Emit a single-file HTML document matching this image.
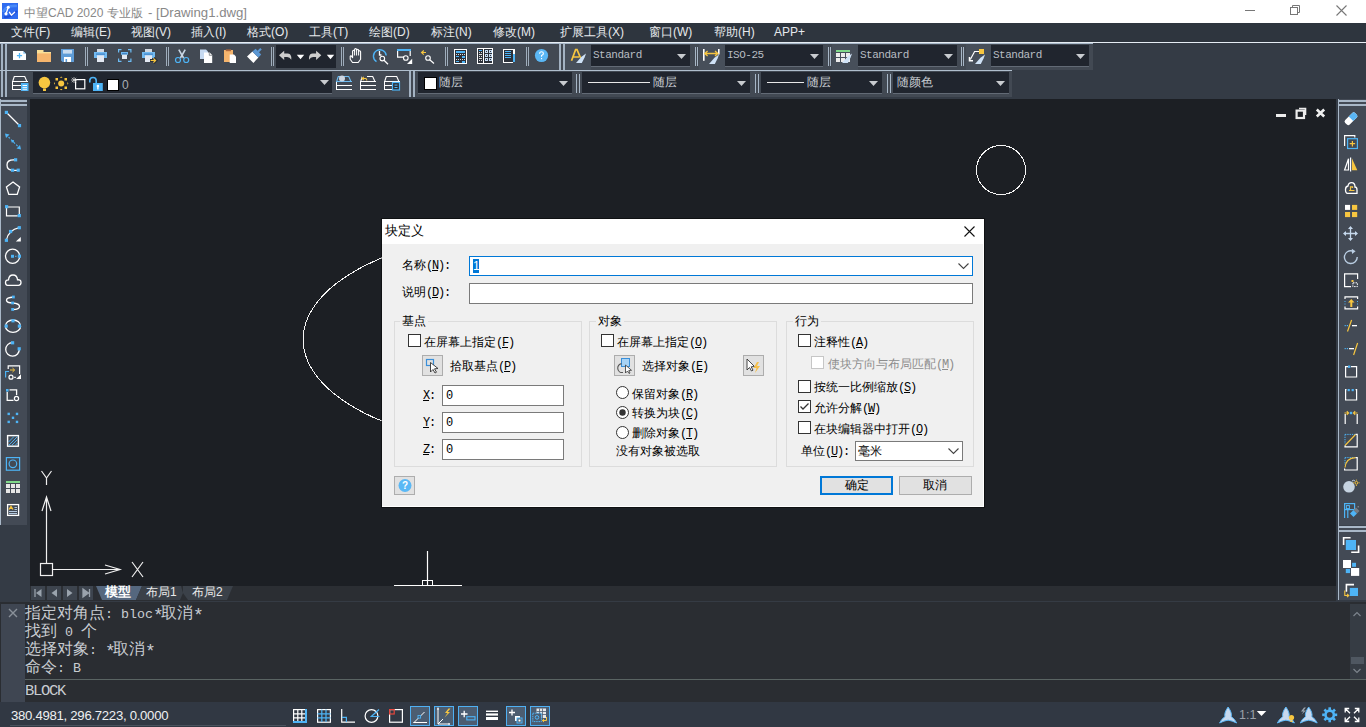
<!DOCTYPE html><html><head><meta charset="utf-8"><style>
*{margin:0;padding:0;box-sizing:border-box}
html,body{width:1366px;height:727px;overflow:hidden;background:#343b45;font-family:"Liberation Sans",sans-serif;position:relative}
.a{position:absolute}
.t{white-space:nowrap;line-height:1}
svg{overflow:visible}
</style></head><body><div class="a" style="left:0px;top:0px;width:1366px;height:23px;background:#ffffff;"></div>
<svg class="a" style="left:2px;top:3px;" width="16" height="16" viewBox="0 0 16 16"><rect x="0" y="0" width="16" height="16" fill="#2f6cf0"/><path d="M1 9 Q4 2 15 3" fill="none" stroke="#4a8af7" stroke-width="2.5"/><path d="M2 14 Q8 15 15 8" fill="none" stroke="#1f4fd8" stroke-width="2"/><path d="M6.3 4.2 L4 10.8 M7.5 9.3 L9.4 12.2 L12.6 9.3" stroke="#fff" stroke-width="1.3" fill="none" stroke-linecap="round" stroke-linejoin="round"/><circle cx="6.3" cy="4.2" r="1.5" fill="#fff"/><circle cx="4" cy="10.8" r="1.6" fill="#fff"/></svg>
<div class="a t" style="left:24px;top:6px;font-size:12px;color:#888;">中望CAD 2020 专业版 <span style="font-size:13.2px;margin-left:2px">- [Drawing1.dwg]</span></div>
<svg class="a" style="left:1245px;top:10px;" width="10" height="1" viewBox="0 0 10 1"><rect x="0" y="0" width="10" height="1" fill="#777"/></svg>
<svg class="a" style="left:1290px;top:5px;" width="10" height="10" viewBox="0 0 10 10"><rect x="0.5" y="2.5" width="7" height="7" fill="none" stroke="#777"/><path d="M2.5 2.5 V0.5 H9.5 V7.5 H7.5" fill="none" stroke="#777"/></svg>
<svg class="a" style="left:1336px;top:5px;" width="11" height="11" viewBox="0 0 11 11"><path d="M0.5 0.5 L10.5 10.5 M10.5 0.5 L0.5 10.5" stroke="#777" stroke-width="1.1"/></svg>
<div class="a" style="left:0px;top:23px;width:1366px;height:19px;background:#2e353e;"></div>
<div class="a t" style="left:11px;top:26px;font-size:12px;color:#e6e9ec;">文件(F)</div>
<div class="a t" style="left:71px;top:26px;font-size:12px;color:#e6e9ec;">编辑(E)</div>
<div class="a t" style="left:131px;top:26px;font-size:12px;color:#e6e9ec;">视图(V)</div>
<div class="a t" style="left:191px;top:26px;font-size:12px;color:#e6e9ec;">插入(I)</div>
<div class="a t" style="left:247px;top:26px;font-size:12px;color:#e6e9ec;">格式(O)</div>
<div class="a t" style="left:309px;top:26px;font-size:12px;color:#e6e9ec;">工具(T)</div>
<div class="a t" style="left:369px;top:26px;font-size:12px;color:#e6e9ec;">绘图(D)</div>
<div class="a t" style="left:431px;top:26px;font-size:12px;color:#e6e9ec;">标注(N)</div>
<div class="a t" style="left:493px;top:26px;font-size:12px;color:#e6e9ec;">修改(M)</div>
<div class="a t" style="left:560px;top:26px;font-size:12px;color:#e6e9ec;">扩展工具(X)</div>
<div class="a t" style="left:649px;top:26px;font-size:12px;color:#e6e9ec;">窗口(W)</div>
<div class="a t" style="left:714px;top:26px;font-size:12px;color:#e6e9ec;">帮助(H)</div>
<div class="a t" style="left:774px;top:26px;font-size:12px;color:#e6e9ec;">APP+</div>
<div class="a" style="left:0px;top:42px;width:1366px;height:1px;background:#e6edf4;"></div>
<div class="a" style="left:0px;top:43px;width:1093px;height:1px;background:#a9b9ca;"></div>
<div class="a" style="left:0px;top:44px;width:1093px;height:26px;background:#424953;"></div>
<div class="a" style="left:0px;top:70px;width:1012px;height:1px;background:#b0bfce;"></div>
<div class="a" style="left:0px;top:71px;width:1012px;height:26px;background:#424953;"></div>
<div class="a" style="left:1px;top:44px;width:2px;height:26px;background:#a3b2c2;"></div>
<div class="a" style="left:5px;top:44px;width:2px;height:26px;background:#a3b2c2;"></div>
<div class="a" style="left:85px;top:47px;width:1px;height:19px;background:#9fadbc;"></div>
<div class="a" style="left:87px;top:47px;width:1px;height:19px;background:#9fadbc;"></div>
<div class="a" style="left:166px;top:47px;width:1px;height:19px;background:#9fadbc;"></div>
<div class="a" style="left:168px;top:47px;width:1px;height:19px;background:#9fadbc;"></div>
<div class="a" style="left:271px;top:47px;width:1px;height:19px;background:#9fadbc;"></div>
<div class="a" style="left:273px;top:47px;width:1px;height:19px;background:#9fadbc;"></div>
<div class="a" style="left:341px;top:47px;width:1px;height:19px;background:#9fadbc;"></div>
<div class="a" style="left:343px;top:47px;width:1px;height:19px;background:#9fadbc;"></div>
<div class="a" style="left:445px;top:47px;width:1px;height:19px;background:#9fadbc;"></div>
<div class="a" style="left:447px;top:47px;width:1px;height:19px;background:#9fadbc;"></div>
<div class="a" style="left:526px;top:47px;width:1px;height:19px;background:#9fadbc;"></div>
<div class="a" style="left:528px;top:47px;width:1px;height:19px;background:#9fadbc;"></div>
<div class="a" style="left:276px;top:45px;width:60px;height:23px;background:#20252e;"></div>
<div class="a" style="left:559px;top:44px;width:2px;height:26px;background:#a3b2c2;"></div>
<div class="a" style="left:563px;top:44px;width:2px;height:26px;background:#a3b2c2;"></div>
<div class="a" style="left:565px;top:44px;width:26px;height:26px;background:#474f5a;"></div>
<div class="a" style="left:591px;top:45px;width:99px;height:21px;background:#20252e;"></div>
<div class="a" style="left:591px;top:66px;width:99px;height:1px;background:#626a75;"></div>
<div class="a t" style="left:593px;top:50px;font-family:'Liberation Mono',monospace;font-size:11px;color:#b8bdc3;letter-spacing:-0.5px;">Standard</div>
<svg class="a" style="left:677px;top:54px;" width="9" height="5" viewBox="0 0 9 5"><path d="M0 0 H9 L4.5 5 Z" fill="#c9ccd0"/></svg>
<div class="a" style="left:695px;top:47px;width:1px;height:19px;background:#a7b6c6;"></div>
<div class="a" style="left:697px;top:47px;width:1px;height:19px;background:#a7b6c6;"></div>
<div class="a" style="left:699px;top:44px;width:26px;height:26px;background:#474f5a;"></div>
<div class="a" style="left:725px;top:45px;width:98px;height:21px;background:#20252e;"></div>
<div class="a" style="left:725px;top:66px;width:98px;height:1px;background:#626a75;"></div>
<div class="a t" style="left:727px;top:50px;font-family:'Liberation Mono',monospace;font-size:11px;color:#b8bdc3;letter-spacing:-0.5px;">ISO-25</div>
<svg class="a" style="left:810px;top:54px;" width="9" height="5" viewBox="0 0 9 5"><path d="M0 0 H9 L4.5 5 Z" fill="#c9ccd0"/></svg>
<div class="a" style="left:828px;top:47px;width:1px;height:19px;background:#a7b6c6;"></div>
<div class="a" style="left:830px;top:47px;width:1px;height:19px;background:#a7b6c6;"></div>
<div class="a" style="left:832px;top:44px;width:26px;height:26px;background:#474f5a;"></div>
<div class="a" style="left:858px;top:45px;width:99px;height:21px;background:#20252e;"></div>
<div class="a" style="left:858px;top:66px;width:99px;height:1px;background:#626a75;"></div>
<div class="a t" style="left:860px;top:50px;font-family:'Liberation Mono',monospace;font-size:11px;color:#b8bdc3;letter-spacing:-0.5px;">Standard</div>
<svg class="a" style="left:944px;top:54px;" width="9" height="5" viewBox="0 0 9 5"><path d="M0 0 H9 L4.5 5 Z" fill="#c9ccd0"/></svg>
<div class="a" style="left:961px;top:47px;width:1px;height:19px;background:#a7b6c6;"></div>
<div class="a" style="left:963px;top:47px;width:1px;height:19px;background:#a7b6c6;"></div>
<div class="a" style="left:966px;top:44px;width:25px;height:26px;background:#474f5a;"></div>
<div class="a" style="left:991px;top:45px;width:98px;height:21px;background:#20252e;"></div>
<div class="a" style="left:991px;top:66px;width:98px;height:1px;background:#626a75;"></div>
<div class="a t" style="left:993px;top:50px;font-family:'Liberation Mono',monospace;font-size:11px;color:#b8bdc3;letter-spacing:-0.5px;">Standard</div>
<svg class="a" style="left:1076px;top:54px;" width="9" height="5" viewBox="0 0 9 5"><path d="M0 0 H9 L4.5 5 Z" fill="#c9ccd0"/></svg>
<div class="a" style="left:1px;top:71px;width:2px;height:26px;background:#a3b2c2;"></div>
<div class="a" style="left:5px;top:71px;width:2px;height:26px;background:#a3b2c2;"></div>
<div class="a" style="left:33px;top:72px;width:299px;height:21px;background:#20252e;"></div>
<div class="a" style="left:33px;top:93px;width:299px;height:1px;background:#626a75;"></div>
<svg class="a" style="left:320px;top:80px;" width="9" height="5" viewBox="0 0 9 5"><path d="M0 0 H9 L4.5 5 Z" fill="#c9ccd0"/></svg>
<div class="a t" style="left:122px;top:79px;font-size:12px;color:#a9aeb4;">0</div>
<div class="a" style="left:409px;top:71px;width:2px;height:26px;background:#a3b2c2;"></div>
<div class="a" style="left:413px;top:71px;width:2px;height:26px;background:#a3b2c2;"></div>
<div class="a" style="left:418px;top:72px;width:154px;height:21px;background:#20252e;"></div>
<div class="a" style="left:418px;top:93px;width:154px;height:1px;background:#626a75;"></div>
<svg class="a" style="left:559px;top:81px;" width="9" height="5" viewBox="0 0 9 5"><path d="M0 0 H9 L4.5 5 Z" fill="#c9ccd0"/></svg>
<svg class="a" style="left:424px;top:77px;" width="13" height="13" viewBox="0 0 13 13"><rect x="0.5" y="0.5" width="12" height="12" fill="#fff" stroke="#000"/></svg>
<div class="a t" style="left:439px;top:76px;font-size:12px;color:#c9ced4;">随层</div>
<div class="a" style="left:576px;top:74px;width:1px;height:19px;background:#a7b6c6;"></div>
<div class="a" style="left:579px;top:74px;width:1px;height:19px;background:#a7b6c6;"></div>
<div class="a" style="left:582px;top:72px;width:168px;height:21px;background:#20252e;"></div>
<div class="a" style="left:582px;top:93px;width:168px;height:1px;background:#626a75;"></div>
<svg class="a" style="left:737px;top:81px;" width="9" height="5" viewBox="0 0 9 5"><path d="M0 0 H9 L4.5 5 Z" fill="#c9ccd0"/></svg>
<div class="a" style="left:588px;top:82px;width:62px;height:1px;background:#e8e8e8;"></div>
<div class="a t" style="left:653px;top:76px;font-size:12px;color:#c9ced4;">随层</div>
<div class="a" style="left:755px;top:74px;width:1px;height:19px;background:#a7b6c6;"></div>
<div class="a" style="left:758px;top:74px;width:1px;height:19px;background:#a7b6c6;"></div>
<div class="a" style="left:761px;top:72px;width:121px;height:21px;background:#20252e;"></div>
<div class="a" style="left:761px;top:93px;width:121px;height:1px;background:#626a75;"></div>
<svg class="a" style="left:869px;top:81px;" width="9" height="5" viewBox="0 0 9 5"><path d="M0 0 H9 L4.5 5 Z" fill="#c9ccd0"/></svg>
<div class="a" style="left:767px;top:82px;width:37px;height:1px;background:#e8e8e8;"></div>
<div class="a t" style="left:807px;top:76px;font-size:12px;color:#c9ced4;">随层</div>
<div class="a" style="left:887px;top:74px;width:1px;height:19px;background:#a7b6c6;"></div>
<div class="a" style="left:890px;top:74px;width:1px;height:19px;background:#a7b6c6;"></div>
<div class="a" style="left:893px;top:72px;width:116px;height:21px;background:#20252e;"></div>
<div class="a" style="left:893px;top:93px;width:116px;height:1px;background:#626a75;"></div>
<svg class="a" style="left:996px;top:81px;" width="9" height="5" viewBox="0 0 9 5"><path d="M0 0 H9 L4.5 5 Z" fill="#c9ccd0"/></svg>
<div class="a t" style="left:897px;top:76px;font-size:12px;color:#c9ced4;">随颜色</div>
<div class="a" style="left:30px;top:99px;width:1306px;height:487px;background:#1c1f24;"></div>
<div class="a" style="left:0px;top:99px;width:27px;height:426px;background:#434a55;"></div>
<div class="a" style="left:0px;top:99px;width:1px;height:426px;background:#a9b8c8;"></div>
<div class="a" style="left:0px;top:100px;width:27px;height:2px;background:#a9b8c8;"></div>
<div class="a" style="left:0px;top:104px;width:27px;height:2px;background:#a9b8c8;"></div>
<div class="a" style="left:1338px;top:99px;width:28px;height:501px;background:#434a55;"></div>
<div class="a" style="left:1338px;top:99px;width:1px;height:501px;background:#a9b8c8;"></div>
<div class="a" style="left:1338px;top:100px;width:28px;height:2px;background:#a9b8c8;"></div>
<div class="a" style="left:1338px;top:104px;width:28px;height:2px;background:#a9b8c8;"></div>
<div class="a" style="left:1339px;top:525px;width:27px;height:1px;background:#3a414b;"></div>
<div class="a" style="left:1338px;top:526px;width:28px;height:2px;background:#a9b8c8;"></div>
<div class="a" style="left:1338px;top:530px;width:28px;height:2px;background:#a9b8c8;"></div>
<svg class="a" style="left:30px;top:99px;overflow:hidden" width="1306" height="487" viewBox="0 0 1306 487"><circle shape-rendering="crispEdges" cx="971" cy="71" r="24.5" fill="none" stroke="#f4f4f4" stroke-width="1"/><ellipse shape-rendering="crispEdges" cx="510.6" cy="240.5" rx="237.5" ry="109.7" fill="none" stroke="#f4f4f4" stroke-width="1"/><rect x="10.5" y="464.5" width="12" height="12" fill="none" stroke="#f0f0f0" stroke-width="1.2"/><path d="M16.5 464 V398 M12 412 L16.5 398 L21 412 M23 470.5 H90 M75 466 L90 470.5 L75 475" fill="none" stroke="#f0f0f0" stroke-width="1.2"/><path d="M11.5 372 L16.5 379 L21.5 372 M16.5 379 V386" fill="none" stroke="#f0f0f0" stroke-width="1.2"/><path d="M102 463 L113 478 M113 463 L102 478" fill="none" stroke="#f0f0f0" stroke-width="1.2"/><path d="M397.5 452 V486 M364 486.5 H432" stroke="#fff" stroke-width="1.2"/><rect x="392.5" y="481.5" width="5" height="5" fill="none" stroke="#fff"/><rect x="397.5" y="481.5" width="5" height="5" fill="none" stroke="#fff"/></svg>
<div class="a" style="left:1276px;top:114px;width:10px;height:3px;background:#ececec;"></div>
<svg class="a" style="left:1295px;top:107px;" width="12" height="12" viewBox="0 0 12 12"><rect x="1.6" y="3.6" width="7.4" height="7.4" fill="none" stroke="#ececec" stroke-width="2.2"/><path d="M4 1.5 H10.5 V8" fill="none" stroke="#ececec" stroke-width="1.6"/></svg>
<svg class="a" style="left:1315px;top:108px;" width="11" height="10" viewBox="0 0 11 10"><path d="M1.8 1.5 L9.2 8.5 M9.2 1.5 L1.8 8.5" stroke="#f0f0f0" stroke-width="2.6"/></svg>
<div class="a" style="left:0px;top:586px;width:30px;height:15px;background:#343b45;"></div>
<div class="a" style="left:30px;top:586px;width:1306px;height:15px;background:#2b2e33;"></div>
<div class="a" style="left:0px;top:601px;width:1366px;height:1px;background:#353b44;"></div>
<div class="a" style="left:31px;top:586px;width:14px;height:14px;background:#3d444e;"></div>
<div class="a" style="left:47px;top:586px;width:14px;height:14px;background:#3d444e;"></div>
<div class="a" style="left:63px;top:586px;width:14px;height:14px;background:#3d444e;"></div>
<div class="a" style="left:79px;top:586px;width:14px;height:14px;background:#3d444e;"></div>
<svg class="a" style="left:31px;top:586px;" width="62" height="14" viewBox="0 0 62 14"><path d="M4 3 V11" stroke="#9aa3ad" stroke-width="1.3"/><path d="M10.5 3 L5 7 L10.5 11 Z" fill="#9aa3ad"/><path d="M26 3 L20.5 7 L26 11 Z" fill="#9aa3ad"/><path d="M36 3 L41.5 7 L36 11 Z" fill="#9aa3ad"/><path d="M52 3 L57.5 7 L52 11 Z M58.5 3 V11" fill="#9aa3ad" stroke="#9aa3ad" stroke-width="1.3"/></svg>
<svg class="a" style="left:95px;top:586px;" width="140" height="14" viewBox="0 0 140 14"><path d="M1 0 H47 L41 14 H7 Z" fill="#55677e"/><path d="M47 0 H86 L88 7 L85 14 H41 Z" fill="#3b4149"/><path d="M88 0 H138 L132 14 H93 L88 7 Z" fill="#3b4149"/></svg>
<div class="a t" style="left:105px;top:586px;font-size:12.5px;color:#fff;font-weight:bold;">模型</div>
<div class="a t" style="left:146px;top:586px;font-size:12px;color:#e8e8e8;">布局1</div>
<div class="a t" style="left:192px;top:586px;font-size:12px;color:#e8e8e8;">布局2</div>
<div class="a" style="left:0px;top:602px;width:1366px;height:101px;background:#2a2d32;"></div>
<div class="a" style="left:1px;top:604px;width:24px;height:98px;background:#3f4652;"></div>
<svg class="a" style="left:8px;top:608px;" width="10" height="10" viewBox="0 0 10 10"><path d="M1 1 L9 9 M9 1 L1 9" stroke="#8a919a" stroke-width="1.4"/></svg>
<div class="a t" style="left:25px;top:604px;font-size:16px;color:#c8ccd1;line-height:18px;"><div style="height:18px">指定对角点<span style="font-family:'Liberation Mono',monospace;font-size:13.33px;">:&nbsp;bloc<span style="font-size:18px;letter-spacing:-2.8px;vertical-align:-3px;line-height:0">*</span></span>取消<span style="font-family:'Liberation Mono',monospace;font-size:13.33px;"><span style="font-size:18px;letter-spacing:-2.8px;vertical-align:-3px;line-height:0">*</span></span></div><div style="height:18px">找到<span style="font-family:'Liberation Mono',monospace;font-size:13.33px;">&nbsp;0&nbsp;</span>个</div><div style="height:18px">选择对象<span style="font-family:'Liberation Mono',monospace;font-size:13.33px;">:&nbsp;<span style="font-size:18px;letter-spacing:-2.8px;vertical-align:-3px;line-height:0">*</span></span>取消<span style="font-family:'Liberation Mono',monospace;font-size:13.33px;"><span style="font-size:18px;letter-spacing:-2.8px;vertical-align:-3px;line-height:0">*</span></span></div><div style="height:18px">命令<span style="font-family:'Liberation Mono',monospace;font-size:13.33px;">:&nbsp;B</span></div></div>
<div class="a" style="left:25px;top:679px;width:1341px;height:1px;background:#5a6463;"></div>
<div class="a" style="left:1350px;top:604px;width:16px;height:75px;background:#363c44;"></div>
<svg class="a" style="left:1350px;top:604px;" width="14" height="75" viewBox="0 0 14 75"><path d="M3.5 12 L7 8.5 L10.5 12" fill="none" stroke="#7d848d" stroke-width="1.2"/><rect x="1" y="53" width="13" height="7" fill="#4f5761"/><path d="M3.5 65 L7 68.5 L10.5 65" fill="none" stroke="#7d848d" stroke-width="1.2"/></svg>
<div class="a t" style="left:25px;top:684px;font-family:'Liberation Mono',monospace;font-size:15.5px;color:#c8ccd1;letter-spacing:-1.3px;">BLOCK</div>
<div class="a" style="left:0px;top:702px;width:1366px;height:25px;background:#313843;"></div>
<div class="a" style="left:10px;top:725px;width:276px;height:1px;background:#4a525d;"></div>
<div class="a t" style="left:11px;top:709px;font-size:13.2px;color:#eef0f2;letter-spacing:-0.3px;">380.4981, 296.7223, 0.0000</div>
<div class="a t" style="left:1239px;top:709px;font-size:12.5px;color:#9aa0a8;">1:1</div>
<svg class="a" style="left:0;top:0" width="1366" height="727" viewBox="0 0 1366 727"><path d="M13 51 H23 L26 54 V60 H13 Z" fill="#ffffff"/><path d="M23.3 51 L26 53.7 H23.3 Z" fill="#8fcaf5"/><path d="M19.5 53 V58.2 M16.9 55.6 H22.1" stroke="#4eb4f6" stroke-width="1.3"/><rect x="37" y="50" width="6.5" height="3" fill="#f9df98"/><rect x="37" y="52" width="14" height="10" fill="#f5b56d"/><rect x="37" y="52" width="14" height="1.4" fill="#f9df98"/><path d="M61 49 H74 V62 H62.6 L61 60.4 Z" fill="#5f9cd7"/><rect x="63" y="50" width="9" height="3.6" fill="#c9dcf0"/><rect x="64" y="57" width="7" height="5" fill="#fff"/><rect x="65.5" y="59" width="1.6" height="3" fill="#5f9cd7"/><rect x="97" y="49" width="7" height="3.5" fill="#d3d9e2"/><rect x="94" y="52" width="13" height="6" fill="#72baf1"/><rect x="96" y="53.6" width="9" height="1" fill="#3778be"/><rect x="97" y="55.3" width="7" height="6.7" fill="#e4e9f2"/><path d="M118.6 52.5 V49.6 H121.5 M128 49.6 H130.9 V52.5 M130.9 58.5 V61.4 H128 M121.5 61.4 H118.6 V58.5" fill="none" stroke="#6dbbf3" stroke-width="1.2"/><rect x="121" y="52" width="7" height="2.8" fill="#72baf1"/><rect x="122" y="53" width="5" height="0.8" fill="#3778be"/><rect x="122" y="54.8" width="5" height="4.2" fill="#e4e9f2"/><rect x="145" y="49" width="7" height="3.5" fill="#d3d9e2"/><rect x="142" y="52" width="13" height="6" fill="#72baf1"/><rect x="144" y="53.6" width="9" height="1" fill="#3778be"/><rect x="145" y="55.3" width="7" height="6.7" fill="#e4e9f2"/><path d="M150 60.5 H156 M153.6 58 L156 60.5 L153.6 63" fill="none" stroke="#2b3039" stroke-width="3"/><path d="M150.6 60.5 H155.6 M153.4 58.3 L155.6 60.5 L153.4 62.7" fill="none" stroke="#f7c640" stroke-width="1.2"/><path d="M178.8 49.6 L183.6 58 M185.2 49.6 L180.4 58" stroke="#c9d6e3" stroke-width="1.6"/><circle cx="178" cy="60" r="2.5" fill="none" stroke="#4eb4f6" stroke-width="1.2"/><circle cx="186.2" cy="60" r="2.5" fill="none" stroke="#4eb4f6" stroke-width="1.2"/><path d="M200 49.4 H206 L208 51.4 V59 H200 Z" fill="#c6daf2"/><path d="M204 52.4 H209.6 L212.2 55 V63 H204 Z" fill="#ffffff"/><path d="M209.3 52.6 V55.3 H212" fill="none" stroke="#454c56" stroke-width="0.6"/><rect x="224" y="50" width="9" height="12" fill="#f5b56d"/><rect x="225.8" y="49.4" width="5.2" height="1.8" fill="#b0683c"/><path d="M229.7 54.5 H234 L236 56.5 V63 H229.7 Z" fill="#ffffff"/><path d="M247 56.6 L252.4 51.6 L258.4 57.6 L253.4 63 Z" fill="#ffffff"/><path d="M252.4 51.6 L255.6 48.8 L261.2 54.4 L258.4 57.6 Z" fill="#5a97d4"/><path d="M258 51.8 L261 48.8" stroke="#5a97d4" stroke-width="2.2"/><path d="M279 55.3 L284.2 50.8 V53.6 H287.6 Q290.5 53.6 291.3 57 L291.3 59.8 Q289.8 57 287.2 57 H284.2 V59.9 Z" fill="#cdcdcd"/><path d="M296.8 54.8 H304.2 L300.5 59.3 Z" fill="#fff"/><path d="M321.3 55.3 L316.1 50.8 V53.6 H312.7 Q309.8 53.6 309 57 L309 59.8 Q310.5 57 313.1 57 H316.1 V59.9 Z" fill="#cdcdcd"/><path d="M326.8 54.8 H334.2 L330.5 59.3 Z" fill="#fff"/><path d="M352.5 62.5 L350.2 59.2 V56.6 Q350.2 55.6 351.2 55.8 L352.6 57.6 V51.2 Q352.6 50.2 353.6 50.2 Q354.6 50.2 354.6 51.2 V49.6 Q354.6 48.6 355.6 48.6 Q356.6 48.6 356.6 49.6 V50.2 Q356.6 49.2 357.6 49.2 Q358.6 49.2 358.6 50.2 V51.6 Q358.6 50.8 359.6 50.8 Q360.6 50.8 360.6 51.8 V59.2 L358.2 62.5 Z" fill="none" stroke="#ffffff" stroke-width="1.1" stroke-linejoin="round"/><path d="M354.6 51 V55.5 M356.6 50 V55.5 M358.6 51.5 V55.5" stroke="#ffffff" stroke-width="1"/><path d="M376.5 61.6 A6.4 6.4 0 1 1 386.2 55.5" fill="none" stroke="#4eb4f6" stroke-width="1.4"/><path d="M379.5 51 V55 H381.5" fill="none" stroke="#ffffff" stroke-width="1.3"/><circle cx="382.3" cy="58.6" r="2.3" fill="none" stroke="#ffffff" stroke-width="1.1"/><path d="M384 60.3 L388 64.2" stroke="#ffffff" stroke-width="1.2"/><path d="M404 57.2 H397.6 V50 M410.2 50 V56" fill="none" stroke="#ffffff" stroke-width="1.2"/><rect x="397" y="49" width="14" height="2" fill="#4eb4f6"/><circle cx="405.8" cy="58" r="2.3" fill="none" stroke="#ffffff" stroke-width="1.1"/><path d="M412.2 58.8 V64 H407 Z" fill="#ffffff"/><path d="M426 52.5 H421.8 M423.8 50.5 L421.6 52.5 L423.8 54.6" fill="none" stroke="#f7c640" stroke-width="1.2"/><circle cx="428" cy="58" r="2.3" fill="none" stroke="#ffffff" stroke-width="1.1"/><path d="M429.7 59.8 L434 63.5" stroke="#ffffff" stroke-width="1.2"/><g shape-rendering="crispEdges"><rect x="454" y="49" width="13" height="15" fill="#ffffff"/><rect x="455" y="50" width="11" height="13" fill="#2c313a"/><rect x="456" y="51" width="9" height="2" fill="#4eb4f6"/><rect x="456" y="54" width="1" height="1" fill="#dddddd"/><rect x="458" y="54" width="1" height="1" fill="#dddddd"/><rect x="460" y="54" width="1" height="1" fill="#dddddd"/><rect x="462" y="54" width="1" height="1" fill="#dddddd"/><rect x="464" y="54" width="1" height="1" fill="#dddddd"/><rect x="456" y="59" width="1" height="1" fill="#dddddd"/><rect x="458" y="59" width="1" height="1" fill="#dddddd"/><rect x="460" y="59" width="1" height="1" fill="#dddddd"/><rect x="462" y="59" width="1" height="1" fill="#dddddd"/><rect x="464" y="59" width="1" height="1" fill="#dddddd"/><rect x="456" y="56" width="3" height="1" fill="#4eb4f6"/><rect x="462" y="56" width="3" height="2" fill="#4eb4f6"/><rect x="456" y="61" width="3" height="1" fill="#4eb4f6"/><rect x="462" y="61" width="3" height="2" fill="#4eb4f6"/></g><g shape-rendering="crispEdges"><rect x="477" y="48" width="16" height="16" fill="#ffffff"/><rect x="478" y="49" width="14" height="14" fill="#2c313a"/><rect x="483" y="49" width="1" height="14" fill="#ffffff"/><rect x="479" y="50" width="3" height="1" fill="#4eb4f6"/><rect x="479" y="52" width="1" height="1" fill="#dddddd"/><rect x="481" y="52" width="1" height="1" fill="#dddddd"/><rect x="479" y="56" width="1" height="1" fill="#dddddd"/><rect x="481" y="56" width="1" height="1" fill="#dddddd"/><rect x="479" y="60" width="1" height="1" fill="#dddddd"/><rect x="481" y="60" width="1" height="1" fill="#dddddd"/><rect x="479" y="54" width="3" height="1" fill="#dddddd"/><rect x="479" y="58" width="3" height="1" fill="#dddddd"/><rect x="485" y="50" width="3" height="3" fill="#c4dbf3"/><rect x="486" y="51" width="1" height="1" fill="#333"/><rect x="489" y="50" width="3" height="3" fill="#c4dbf3"/><rect x="490" y="51" width="1" height="1" fill="#333"/><rect x="485" y="54" width="3" height="3" fill="#c4dbf3"/><rect x="486" y="55" width="1" height="1" fill="#333"/><rect x="489" y="54" width="3" height="3" fill="#c4dbf3"/><rect x="490" y="55" width="1" height="1" fill="#333"/><rect x="485" y="58" width="3" height="3" fill="#c4dbf3"/><rect x="486" y="59" width="1" height="1" fill="#333"/><rect x="489" y="58" width="3" height="3" fill="#c4dbf3"/><rect x="490" y="59" width="1" height="1" fill="#333"/></g><g shape-rendering="crispEdges"><rect x="503" y="49" width="12" height="14" fill="#ffffff"/><rect x="504" y="50" width="9" height="12" fill="#2c313a"/><rect x="511" y="50" width="2" height="4" fill="#2c313a"/><rect x="513" y="62" width="2" height="1" fill="#424953"/><rect x="505" y="51" width="6" height="1" fill="#4eb4f6"/><rect x="505" y="53" width="6" height="1" fill="#4eb4f6"/><rect x="505" y="55" width="6" height="1" fill="#4eb4f6"/><rect x="505" y="57" width="6" height="1" fill="#4eb4f6"/><rect x="513" y="54" width="2" height="8" fill="#4eb4f6"/></g><circle cx="541.5" cy="55.5" r="6.6" fill="#5ab7f5"/><path d="M539.6 53.8 Q539.6 51.8 541.5 51.8 Q543.4 51.8 543.4 53.6 Q543.4 54.8 541.5 55.6 V56.8" fill="none" stroke="#fff" stroke-width="1.1"/><rect x="541" y="58" width="1.1" height="1.2" fill="#fff"/><path d="M571.5 60.8 L575.6 49.6 H577 L580.6 58 M573 57 H579" fill="none" stroke="#f7c640" stroke-width="1.7"/><path d="M576 63 L581.5 56.8 L586 53.5 L584.6 57.6 L581.8 63 Z" fill="#cfe2f6"/><rect x="703" y="49" width="1.6" height="11.8" fill="#ffffff"/><rect x="718" y="49" width="1.6" height="5.5" fill="#ffffff"/><path d="M704.6 53.5 H718 M707.6 51 L704.8 53.5 L707.6 56 M715 51 L717.8 53.5 L715 56" fill="none" stroke="#f7c640" stroke-width="1.3"/><path d="M709 64 L714.5 57.8 L719 54.5 L717.6 58.6 L714.8 64 Z" fill="#cfe2f6"/><rect x="836" y="50" width="14" height="2" fill="#7fd88a"/><rect x="836" y="53" width="4" height="4" fill="#ececec"/><rect x="841" y="53" width="4" height="4" fill="#ececec"/><rect x="846" y="53" width="4" height="4" fill="#ececec"/><rect x="836" y="58" width="4" height="4" fill="#ececec"/><rect x="841" y="58" width="4" height="4" fill="#ececec"/><rect x="846" y="58" width="4" height="4" fill="#ececec"/><path d="M842 63 L847.5 56.8 L852 53.5 L850.6 57.6 L847.8 63 Z" fill="#cfe2f6"/><rect x="979" y="49" width="5" height="5" fill="#f7c640"/><path d="M979 51.5 H974.6 L970.3 59.5" fill="none" stroke="#ffffff" stroke-width="1.2"/><path d="M969.5 57 V60.8 H973" fill="none" stroke="#ffffff" stroke-width="1.5"/><path d="M975 64 L980.5 57.8 L985 54.5 L983.6 58.6 L980.8 64 Z" fill="#cfe2f6"/><g shape-rendering="crispEdges"><rect x="14" y="76" width="11" height="1" fill="#ffffff"/><rect x="12" y="81" width="16" height="1" fill="#ffffff"/><rect x="12" y="85" width="16" height="1" fill="#ffffff"/><rect x="12" y="89" width="16" height="1" fill="#ffffff"/><rect x="12" y="82" width="1" height="3" fill="#ffffff"/><rect x="12" y="86" width="1" height="3" fill="#ffffff"/></g><path d="M14.3 76.5 L12.8 81 M24.7 76.5 L26.7 81" stroke="#ffffff" stroke-width="1.1"/><rect x="21" y="83" width="7.5" height="8" fill="#4eb4f6"/><rect x="22.5" y="85" width="4.5" height="1" fill="#fff"/><rect x="22.5" y="87.2" width="4.5" height="1" fill="#fff"/><rect x="22.5" y="89.3" width="4.5" height="0.8" fill="#fff"/><circle cx="44.4" cy="82.6" r="5.8" fill="#f7c640"/><rect x="43" y="88.5" width="3" height="2.5" fill="#f7c640"/><rect x="55.5" y="78" width="2.5" height="2.5" fill="#f7c640"/><rect x="64.5" y="78" width="2.5" height="2.5" fill="#f7c640"/><rect x="55.5" y="86.5" width="2.5" height="2.5" fill="#f7c640"/><rect x="64.5" y="86.5" width="2.5" height="2.5" fill="#f7c640"/><circle cx="61.2" cy="83.4" r="3" fill="#f7c640"/><path d="M59.8 77.8 L61.2 76.6 L62.6 77.8 Z M59.8 89 L61.2 90.2 L62.6 89 Z M55 82 L54 83.4 L55 84.8 Z M67.4 82 L68.4 83.4 L67.4 84.8 Z" fill="#f7c640"/><rect x="75.6" y="79.6" width="9.2" height="9.2" fill="none" stroke="#ffffff" stroke-width="1.2"/><path d="M71 80 H77 M74 77 V83 M71.8 77.8 L76.2 82.2 M76.2 77.8 L71.8 82.2" stroke="#cfcfcf" stroke-width="0.8"/><path d="M89.8 82.5 V80.5 Q89.8 77.5 93 77.5 Q96.2 77.5 96.2 80.5 V83" fill="none" stroke="#4eb4f6" stroke-width="1.6"/><rect x="93" y="83" width="9.8" height="8" fill="#4eb4f6"/><circle cx="97.9" cy="86" r="1.3" fill="#fff"/><rect x="97.2" y="86.5" width="1.4" height="3" fill="#fff"/><rect x="107.5" y="79.5" width="11" height="11" fill="#fff" stroke="#000"/><g shape-rendering="crispEdges"><rect x="338" y="76" width="11" height="1" fill="#6ebcf2"/><rect x="336" y="81" width="16" height="1" fill="#6ebcf2"/><rect x="336" y="85" width="16" height="1" fill="#ffffff"/><rect x="336" y="89" width="16" height="1" fill="#ffffff"/><rect x="336" y="82" width="1" height="3" fill="#ffffff"/><rect x="336" y="86" width="1" height="3" fill="#ffffff"/></g><path d="M338.3 76.5 L336.8 81 M348.7 76.5 L350.7 81" stroke="#6ebcf2" stroke-width="1.1"/><circle cx="342" cy="78.6" r="3" fill="#cdd6e2"/><g shape-rendering="crispEdges"><rect x="362" y="76" width="11" height="1" fill="#ffffff"/><rect x="360" y="81" width="16" height="1" fill="#ffffff"/><rect x="360" y="85" width="16" height="1" fill="#ffffff"/><rect x="360" y="89" width="16" height="1" fill="#ffffff"/><rect x="360" y="82" width="1" height="3" fill="#ffffff"/><rect x="360" y="86" width="1" height="3" fill="#ffffff"/></g><path d="M362.3 76.5 L360.8 81 M372.7 76.5 L374.7 81" stroke="#ffffff" stroke-width="1.1"/><rect x="362" y="76" width="5" height="5" fill="#424953"/><path d="M366 78.5 H362 M363.8 76.8 L362 78.5 L363.8 80.2 M365.5 78.5 Q366.7 78.5 366.7 80 V80.6" fill="none" stroke="#f7c640" stroke-width="1.1"/><g shape-rendering="crispEdges"><rect x="386" y="76" width="11" height="1" fill="#ffffff"/><rect x="384" y="81" width="16" height="1" fill="#ffffff"/><rect x="384" y="85" width="16" height="1" fill="#ffffff"/><rect x="384" y="89" width="16" height="1" fill="#ffffff"/><rect x="384" y="82" width="1" height="3" fill="#ffffff"/><rect x="384" y="86" width="1" height="3" fill="#ffffff"/></g><path d="M386.3 76.5 L384.8 81 M396.7 76.5 L398.7 81" stroke="#ffffff" stroke-width="1.1"/><rect x="392.5" y="82.5" width="7" height="7.5" fill="#2a2f37" stroke="#4eb4f6" stroke-width="1.2"/><rect x="394.5" y="84.6" width="3" height="1" fill="#4eb4f6"/><rect x="394.5" y="87" width="3" height="1" fill="#4eb4f6"/></svg>
<svg class="a" style="left:0;top:0" width="1366" height="727" viewBox="0 0 1366 727"><path d="M6.5 112.5 L19.5 125.5" stroke="#ffffff" stroke-width="1.2"/><rect x="4.8" y="110.8" width="3.2" height="3.2" fill="#4eb4f6"/><rect x="17.9" y="124" width="3.2" height="3.2" fill="#4eb4f6"/><path d="M6 134.5 L20 148.5" stroke="#4eb4f6" stroke-width="1.1" stroke-dasharray="2 1.6"/><path d="M5 133.5 L9.5 134.5 L6 138 Z M21 149.5 L16.5 148.5 L20 145 Z" fill="#4eb4f6"/><rect x="11.5" y="140" width="2.4" height="2.4" fill="#4eb4f6"/><path d="M15 159.8 H13.5 Q7 159.8 7 165 Q7 170.3 13 170.3 H18" fill="none" stroke="#ffffff" stroke-width="1.3"/><rect x="14" y="158.2" width="3.2" height="3.2" fill="#4eb4f6"/><rect x="11" y="168.6" width="3.2" height="3.2" fill="#4eb4f6"/><rect x="16.6" y="168.6" width="3.2" height="3.2" fill="#4eb4f6"/><path d="M13 182 L19.6 187 L17.2 194.4 H8.8 L6.4 187 Z" fill="none" stroke="#ffffff" stroke-width="1.3" stroke-linejoin="miter"/><path d="M8 207 H19.3 V215.5 M17.7 215.8 H6.5 V208" fill="none" stroke="#ffffff" stroke-width="1.2"/><rect x="5" y="205.1" width="3.2" height="3.2" fill="#4eb4f6"/><rect x="17.7" y="214" width="3.2" height="3.2" fill="#4eb4f6"/><path d="M6.4 240 Q8.5 230 19.3 227.7" fill="none" stroke="#ffffff" stroke-width="1.2"/><rect x="4.8" y="238.7" width="3.2" height="3.2" fill="#4eb4f6"/><rect x="9" y="229.9" width="3.2" height="3.2" fill="#4eb4f6"/><rect x="17.7" y="226.1" width="3.2" height="3.2" fill="#4eb4f6"/><path d="M15.8 241.6 L20.8 237 V241.6 Z" fill="#ffffff"/><circle cx="12.6" cy="256.3" r="7.1" fill="none" stroke="#ffffff" stroke-width="1.3"/><rect x="11" y="254.8" width="3" height="3" fill="#4eb4f6"/><rect x="15" y="255.8" width="1.5" height="1" fill="#4eb4f6"/><rect x="17.8" y="254.6" width="3.2" height="3.2" fill="#4eb4f6"/><path d="M7.5 285.3 H18.5 Q21 285.3 21 282.5 Q21 279.5 17.5 279.8 Q17 275 13 275 Q9 275 8.5 279.8 Q5.5 279.8 5.5 282.5 Q5.5 285.3 7.5 285.3 Z" fill="none" stroke="#ffffff" stroke-width="1.3"/><path d="M13.6 297 Q6 297.5 6.5 300.5 Q7 303 12.6 303 Q19.5 303.5 19.5 306.5 Q19.5 309.5 12.6 309.5" fill="none" stroke="#ffffff" stroke-width="1.3"/><rect x="12" y="295.6" width="2.8" height="2.8" fill="#4eb4f6"/><rect x="11.2" y="301.6" width="2.8" height="2.8" fill="#4eb4f6"/><rect x="11.2" y="308" width="2.8" height="2.8" fill="#4eb4f6"/><ellipse cx="13" cy="326.2" rx="7.6" ry="6.2" fill="none" stroke="#ffffff" stroke-width="1.3"/><rect x="11.4" y="319.2" width="3.2" height="3.2" fill="#4eb4f6"/><rect x="4.6" y="324.5" width="3.2" height="3.2" fill="#4eb4f6"/><rect x="17.8" y="324.5" width="3.2" height="3.2" fill="#4eb4f6"/><path d="M12.6 342.6 A6.8 6.8 0 1 0 19.3 349" fill="none" stroke="#ffffff" stroke-width="1.3"/><rect x="11" y="341.2" width="3.2" height="3.2" fill="#4eb4f6"/><rect x="17.6" y="347.2" width="3.2" height="3.2" fill="#4eb4f6"/><path d="M8.2 369 V365.8 H19.6 V374" fill="none" stroke="#ffffff" stroke-width="1.2"/><path d="M5.6 377.5 V371.5 H9" fill="none" stroke="#4eb4f6" stroke-width="1.2"/><path d="M10 370 H14.5 M12.5 368 L14.6 370 L12.5 372" fill="none" stroke="#f7c640" stroke-width="1"/><circle cx="11" cy="377.2" r="2" fill="none" stroke="#ffffff" stroke-width="1.2"/><rect x="14" y="376.8" width="2" height="1" fill="#ffffff"/><path d="M16.2 379 L21 374.2 V379 Z" fill="#ffffff"/><path d="M9.5 389.9 H16.6 V395 M7.2 392 V400.3 H13.5" fill="none" stroke="#ffffff" stroke-width="1.3"/><circle cx="16.5" cy="398.5" r="2.1" fill="none" stroke="#ffffff" stroke-width="1.2"/><rect x="6" y="389" width="2.6" height="2.6" fill="#4eb4f6"/><rect x="7.499999999999999" y="412.7" width="2.4" height="2.4" fill="#4eb4f6"/><rect x="15.8" y="412.7" width="2.4" height="2.4" fill="#4eb4f6"/><rect x="11.8" y="416.6" width="2.4" height="2.4" fill="#4eb4f6"/><rect x="7.499999999999999" y="420.7" width="2.4" height="2.4" fill="#4eb4f6"/><rect x="15.8" y="420.7" width="2.4" height="2.4" fill="#4eb4f6"/><rect x="7.6" y="435.6" width="10.8" height="10.6" fill="none" stroke="#ffffff" stroke-width="1.4"/><path d="M8.5 442 L14 436.5 M8.5 445.5 L17.5 436.5 M11.5 445.5 L17.5 439.5 M15 445.5 L17.5 443" stroke="#4eb4f6" stroke-width="0.9"/><rect x="6.4" y="457.6" width="13.2" height="12.6" fill="none" stroke="#4eb4f6" stroke-width="1.2"/><circle cx="12.9" cy="463.8" r="3.8" fill="none" stroke="#4eb4f6" stroke-width="1.2"/><rect x="6" y="481" width="14" height="2" fill="#7fd88a"/><rect x="6" y="484" width="4" height="4" fill="#e6e6e6"/><rect x="11" y="484" width="4" height="4" fill="#e6e6e6"/><rect x="16" y="484" width="4" height="4" fill="#e6e6e6"/><rect x="6" y="489" width="4" height="4" fill="#e6e6e6"/><rect x="11" y="489" width="4" height="4" fill="#e6e6e6"/><rect x="16" y="489" width="4" height="4" fill="#e6e6e6"/><rect x="7.6" y="504.6" width="11" height="10.8" fill="none" stroke="#ffffff" stroke-width="1.3"/><path d="M9 509.5 L11 506.5 L13 509.5 M9.5 508.3 H12.5" fill="none" stroke="#f7c640" stroke-width="1.3"/><rect x="14.5" y="507" width="2.5" height="0.9" fill="#c0d8f0"/><rect x="14.5" y="509" width="2.5" height="0.9" fill="#c0d8f0"/><rect x="9" y="511" width="8" height="0.9" fill="#c0d8f0"/><rect x="9" y="513" width="8" height="0.9" fill="#c0d8f0"/><g transform="rotate(-45 1351 118.8)"><rect x="1344" y="115.6" width="14" height="6.4" rx="2" fill="#ffffff"/><path d="M1351 115.6 H1356 Q1358 115.6 1358 117.6 V120 Q1358 122 1356 122 H1351 Z" fill="#5ab6f5"/></g><path d="M1344.6 145.9 V135.7 H1354.8 V137.6" fill="none" stroke="#ffffff" stroke-width="1.2"/><rect x="1347.6" y="138.7" width="9.8" height="9.8" fill="#424953" stroke="#4eb4f6" stroke-width="1.2"/><path d="M1352.4 141 V146.4 M1349.7 143.7 H1355.1" stroke="#f7c640" stroke-width="1.2"/><path d="M1348.5 158.8 V170 H1344.6 Z" fill="none" stroke="#ffffff" stroke-width="1.2"/><rect x="1350" y="157.5" width="1.2" height="14" fill="#ffffff"/><path d="M1352 158.5 L1357.3 170.2 H1352 Z" fill="#f7c640"/><path d="M1347.5 193.3 H1357 V190 Q1357 187 1355 187 Q1355 182.6 1351.5 182.6 Q1348.5 182.6 1348 186 Q1345.5 186.5 1345.5 189.5 Q1345.5 193.3 1347.5 193.3" fill="none" stroke="#ffffff" stroke-width="1.3"/><path d="M1349 190.5 H1354.5 M1350.5 190.5 V186.8 H1352.5 V188" fill="none" stroke="#f7c640" stroke-width="1.2"/><rect x="1345" y="204.9" width="5.1" height="5" fill="#ffffff"/><rect x="1352" y="204.9" width="5.2" height="5" fill="#f7c640"/><rect x="1345" y="212" width="5.1" height="5.1" fill="#f7c640"/><rect x="1352" y="212" width="5.2" height="5.1" fill="#f7c640"/><path d="M1350.5 227.5 V239.5 M1344.5 233.5 H1356.5" stroke="#c5d8ec" stroke-width="1.3"/><path d="M1350.5 226 L1353 229 H1348 Z M1350.5 241 L1353 238 H1348 Z M1343 233.5 L1346 231 V236 Z M1358 233.5 L1355 231 V236 Z" fill="#c5d8ec"/><path d="M1352.5 251 A6.4 6.4 0 1 0 1357.2 257" fill="none" stroke="#b9cde2" stroke-width="1.4"/><path d="M1351.8 248.8 L1355.6 251.2 L1352 254 Z" fill="#b9cde2"/><path d="M1357.6 279 V273.8 H1344.6 V286.6 H1351" fill="none" stroke="#ffffff" stroke-width="1.2"/><rect x="1351.5" y="280" width="2" height="2" fill="#f7c640"/><path d="M1353 282.8 H1357.4 V286.6 H1352.8 Z" fill="none" stroke="#ffffff" stroke-width="1" stroke-dasharray="1.5 1"/><path d="M1345 299 V296.8 H1357.6 V299 M1345 306.5 V308.8 H1357.6 V306.5" fill="none" stroke="#ffffff" stroke-width="1.2"/><rect x="1344.5" y="301" width="1" height="1" fill="#4eb4f6"/><rect x="1344.5" y="303.5" width="1" height="1" fill="#4eb4f6"/><rect x="1357" y="301" width="1" height="1" fill="#4eb4f6"/><rect x="1357" y="303.5" width="1" height="1" fill="#4eb4f6"/><path d="M1351.3 299 L1354.5 302.5 H1352.3 V307 H1350.3 V302.5 H1348 Z" fill="#f7c640"/><rect x="1344.6" y="325" width="1.2" height="1.2" fill="#4eb4f6"/><rect x="1346.8" y="325" width="1.2" height="1.2" fill="#4eb4f6"/><path d="M1347.5 331.5 L1351.6 320" stroke="#f7c640" stroke-width="1.2"/><rect x="1352" y="325" width="5" height="1.3" fill="#ffffff"/><rect x="1344.6" y="348" width="1.2" height="1.2" fill="#4eb4f6"/><rect x="1346.8" y="348" width="1.2" height="1.2" fill="#4eb4f6"/><rect x="1349" y="348" width="5" height="1.3" fill="#ffffff"/><path d="M1353.6 355 L1357.6 343" stroke="#f7c640" stroke-width="1.2"/><path d="M1348 366.6 H1345.6 V377 H1356.6 V366.6 H1351" fill="none" stroke="#ffffff" stroke-width="1.2"/><rect x="1348" y="365.5" width="2.4" height="2.4" fill="#4eb4f6"/><path d="M1346.5 389.6 H1345.6 V400 H1356.6 V389.6 H1355.6" fill="none" stroke="#ffffff" stroke-width="1.2"/><rect x="1347.6" y="389" width="2.2" height="2.2" fill="#4eb4f6"/><rect x="1351.6" y="389" width="2.2" height="2.2" fill="#4eb4f6"/><path d="M1344.5 413 H1348.5 M1346.8 411.2 L1348.6 413 L1346.8 414.8 M1357.5 413 H1353.5 M1355.2 411.2 L1353.4 413 L1355.2 414.8" fill="none" stroke="#f7c640" stroke-width="1.1"/><rect x="1349.8" y="411.8" width="2.4" height="2.4" fill="#4eb4f6"/><rect x="1344.6" y="414" width="1.2" height="10" fill="#ffffff"/><rect x="1356.6" y="414" width="1.2" height="10" fill="#ffffff"/><path d="M1345 434.4 H1355 M1345 434.4 V444" stroke="#4eb4f6" stroke-width="1" stroke-dasharray="1.3 1"/><path d="M1345 445.5 L1355.5 434.5" stroke="#f7c640" stroke-width="1.1"/><path d="M1355.5 434.4 H1357.2 V446.8 H1345 V445.5" fill="none" stroke="#ffffff" stroke-width="1.2"/><path d="M1345 457.6 H1354 M1345 457.6 V465" stroke="#4eb4f6" stroke-width="1" stroke-dasharray="1.3 1"/><path d="M1345 467.5 Q1346 458 1355.5 457.6" fill="none" stroke="#f7c640" stroke-width="1.1"/><path d="M1355.5 457.6 H1357.2 V470 H1344.6 V468.5" fill="none" stroke="#ffffff" stroke-width="1.2"/><circle cx="1349" cy="486.8" r="5.8" fill="#c6d3e1"/><path d="M1352 481 Q1353.5 479.5 1355 481" fill="none" stroke="#c6d3e1" stroke-width="1"/><circle cx="1356.4" cy="482.8" r="1.4" fill="none" stroke="#f7c640" stroke-width="1"/><path d="M1356.4 479.6 V480.6 M1356.4 485 V486 M1353.2 482.8 H1354.2 M1358.6 482.8 H1359.6" stroke="#f7c640" stroke-width="0.9"/><rect x="1344.6" y="503.6" width="10" height="6" fill="none" stroke="#4eb4f6" stroke-width="1.2"/><rect x="1346.4" y="505.6" width="3" height="3" fill="none" stroke="#4eb4f6" stroke-width="1"/><path d="M1344.6 509.6 V518 M1347.8 508.6 V518" stroke="#4eb4f6" stroke-width="1.2"/><path d="M1350 513.5 L1353.5 510 L1357 513.5 L1353.5 517 Z" fill="#4eb4f6"/><path d="M1353.5 510 L1356 507.5 L1359.5 511 L1357 513.5 Z" fill="#777d86"/><rect x="1357.5" y="506" width="1.5" height="1.5" fill="#777d86"/><path d="M1343.6 545.1 V537.7 H1350.6" fill="none" stroke="#ffffff" stroke-width="1.6"/><rect x="1345.8" y="540" width="10.2" height="10" fill="#4eb4f6"/><path d="M1358.6 545.5 V552.3 H1351.2" fill="none" stroke="#ffffff" stroke-width="1.6"/><rect x="1343" y="560" width="8" height="8" fill="#ffffff"/><rect x="1352.1" y="562.8" width="3.9" height="4" fill="#4eb4f6"/><rect x="1345.8" y="568.9" width="4.3" height="4.2" fill="#4eb4f6"/><rect x="1351" y="568" width="8.2" height="7.9" fill="#ffffff"/><path d="M1346.4 591.8 V584.6 H1354" fill="none" stroke="#ffffff" stroke-width="1.6"/><rect x="1349.8" y="587.9" width="8.2" height="8.1" fill="#4eb4f6"/><path d="M1344.8 590.5 V595.5 H1348.6 M1347 593.8 L1348.8 595.5 L1347 597.2" fill="none" stroke="#f7c640" stroke-width="1.1"/></svg>
<svg class="a" style="left:0;top:0" width="1366" height="727" viewBox="0 0 1366 727"><rect x="293.6" y="709.6" width="12.6" height="12.6" fill="none" stroke="#ffffff" stroke-width="1.2"/><path d="M297.8 709 V722 M301.8 709 V722 M293 713.8 H306 M293 717.8 H306" stroke="#ffffff" stroke-width="1.2"/><rect x="293" y="721" width="14" height="2" fill="#4eb4f6"/><rect x="305" y="709" width="2" height="14" fill="#4eb4f6"/><rect x="317.6" y="709.6" width="12.8" height="12.6" fill="none" stroke="#ffffff" stroke-width="1.2"/><path d="M321.8 709.5 V722 M326 709.5 V722 M317.5 713.8 H330.5 M317.5 717.8 H330.5" stroke="#4eb4f6" stroke-width="1.2"/><path d="M341.7 709 V722.2 H355" fill="none" stroke="#ffffff" stroke-width="1.2"/><path d="M342 717.4 H346.4 V722" fill="none" stroke="#4eb4f6" stroke-width="1.2"/><circle cx="371.5" cy="716" r="6.4" fill="none" stroke="#ffffff" stroke-width="1.2"/><path d="M379 709.5 L371.3 716.5 H379.5" fill="none" stroke="#4eb4f6" stroke-width="1.2"/><rect x="389.6" y="709.6" width="12.8" height="12.6" fill="none" stroke="#ffffff" stroke-width="1.2"/><rect x="389.6" y="709.6" width="4.6" height="4.4" fill="none" stroke="#e6463c" stroke-width="1.2"/><rect x="410.5" y="706.5" width="19" height="19" fill="#4c5d71" stroke="#4fb0f3" stroke-width="1"/><path d="M413.5 723 L424.5 712 M413.5 722.5 H427" stroke="#ffffff" stroke-width="1"/><rect x="418" y="715.5" width="2.6" height="2.6" fill="#4c5d71" stroke="#4eb4f6" stroke-width="0.9"/><rect x="434.5" y="706.5" width="19" height="19" fill="#4c5d71" stroke="#4fb0f3" stroke-width="1"/><path d="M438 707.5 V724 H450 M438 724 L443 719" fill="none" stroke="#ffffff" stroke-width="1"/><path d="M436.8 709.5 L438 707.8 L439.2 709.5 Z M448.5 722.8 L450.2 724 L448.5 725.2 Z" fill="#ffffff"/><path d="M448.5 708.5 L445 713 H447.5 L444.5 717.5 L450 712 H447.5 L450.5 708.5 Z" fill="#f7c640"/><rect x="458.5" y="706.5" width="19" height="19" fill="#4c5d71" stroke="#4fb0f3" stroke-width="1"/><path d="M461 714 H467.5 M464.2 710.7 V717.3" stroke="#ffffff" stroke-width="1.3"/><rect x="466.8" y="716.7" width="8.2" height="3.2" fill="#4c5d71" stroke="#4eb4f6" stroke-width="1.1"/><rect x="486" y="710.6" width="12" height="1.4" fill="#ffffff"/><rect x="486" y="713.4" width="12" height="2.2" fill="#ffffff"/><rect x="486" y="717" width="12" height="3" fill="#ffffff"/><rect x="506.5" y="706.5" width="19" height="19" fill="#4c5d71" stroke="#4fb0f3" stroke-width="1"/><path d="M509 712.5 H515 M512 709.5 V715.5" stroke="#ffffff" stroke-width="1.3"/><rect x="515" y="716" width="5" height="5" fill="#ffffff"/><rect x="517" y="718" width="5" height="5" fill="#4c5d71" stroke="#4eb4f6" stroke-width="1"/><rect x="518.5" y="719.5" width="2" height="2" fill="#ffffff"/><rect x="530.5" y="706.5" width="19" height="19" fill="#4c5d71" stroke="#4fb0f3" stroke-width="1"/><rect x="536.5" y="708.5" width="9.5" height="9.5" fill="#e8e8e8"/><path d="M539.5 708.5 V718 M542.5 708.5 V718 M536.5 711.5 H546 M536.5 714.5 H546" stroke="#4c5d71" stroke-width="0.8"/><rect x="532.8" y="713.2" width="8.6" height="8.4" fill="#4c5d71" stroke="#4eb4f6" stroke-width="1" stroke-dasharray="1.5 0.8"/><circle cx="537" cy="717.4" r="1.8" fill="none" stroke="#4eb4f6" stroke-width="1"/><path d="M546.5 717 V720.5 H542.5 M544 719 L542.3 720.5 L544 722" fill="none" stroke="#f7c640" stroke-width="1"/><g transform="translate(1219.6 707)"><path d="M8.5 0 Q12.8 6 11.6 9.6 Q15.5 12.2 17 16 Q12.5 13.6 8.5 13.2 Q4.5 13.6 0 16 Q1.5 12.2 5.4 9.6 Q4.2 6 8.5 0 Z" fill="#c8d9ee" stroke="#5ab6f5" stroke-width="1" stroke-linejoin="round"/></g><path d="M1256.8 711 H1266.3 L1261.5 716 Z" fill="#ffffff"/><g transform="translate(1277.4 707)"><path d="M8.5 0 Q12.8 6 11.6 9.6 Q15.5 12.2 17 16 Q12.5 13.6 8.5 13.2 Q4.5 13.6 0 16 Q1.5 12.2 5.4 9.6 Q4.2 6 8.5 0 Z" fill="#c8d9ee" stroke="#5ab6f5" stroke-width="1" stroke-linejoin="round"/></g><circle cx="1291.5" cy="717.5" r="2.6" fill="#f7c640"/><rect x="1290.3" y="720.5" width="2.4" height="1.5" fill="#f7c640"/><g transform="translate(1300.2 707)"><path d="M8.5 0 Q12.8 6 11.6 9.6 Q15.5 12.2 17 16 Q12.5 13.6 8.5 13.2 Q4.5 13.6 0 16 Q1.5 12.2 5.4 9.6 Q4.2 6 8.5 0 Z" fill="#c8d9ee" stroke="#5ab6f5" stroke-width="1" stroke-linejoin="round"/></g><path d="M1304 707.5 L1301 711.5 H1303.5 L1301.5 714.5 L1306 710.5 H1303.5 L1306 707.5 Z" fill="#9aa3ad"/><circle cx="1329.7" cy="714.8" r="4.2" fill="none" stroke="#4eb4f6" stroke-width="2.6"/><rect x="1334.60" y="713.50" width="2.6" height="2.6" fill="#4eb4f6" transform="rotate(0 1335.90 714.80)"/><rect x="1332.78" y="717.88" width="2.6" height="2.6" fill="#4eb4f6" transform="rotate(45 1334.08 719.18)"/><rect x="1328.40" y="719.70" width="2.6" height="2.6" fill="#4eb4f6" transform="rotate(90 1329.70 721.00)"/><rect x="1324.02" y="717.88" width="2.6" height="2.6" fill="#4eb4f6" transform="rotate(135 1325.32 719.18)"/><rect x="1322.20" y="713.50" width="2.6" height="2.6" fill="#4eb4f6" transform="rotate(180 1323.50 714.80)"/><rect x="1324.02" y="709.12" width="2.6" height="2.6" fill="#4eb4f6" transform="rotate(225 1325.32 710.42)"/><rect x="1328.40" y="707.30" width="2.6" height="2.6" fill="#4eb4f6" transform="rotate(270 1329.70 708.60)"/><rect x="1332.78" y="709.12" width="2.6" height="2.6" fill="#4eb4f6" transform="rotate(315 1334.08 710.42)"/><path d="M1345.2 712.5 V708.5 H1349.2 M1345.5 708.8 L1350 713.3 M1358.8 712.5 V708.5 H1354.8 M1358.5 708.8 L1354 713.3 M1345.2 717.5 V721.5 H1349.2 M1345.5 721.2 L1350 716.7 M1358.8 717.5 V721.5 H1354.8 M1358.5 721.2 L1354 716.7" fill="none" stroke="#ffffff" stroke-width="1.3"/></svg>
<div class="a" style="left:382px;top:219px;width:602px;height:288px;background:#f0f0f0;border-right:1px solid #fff;border-bottom:1px solid #fff;box-shadow:0 0 0 1px rgba(0,0,0,0.45);"></div>
<div class="a" style="left:382px;top:219px;width:602px;height:25px;background:#ffffff;"></div>
<div class="a t" style="left:385px;top:225px;font-size:12px;color:#000;font-size:12.5px;">块定义</div>
<svg class="a" style="left:964px;top:226px;" width="11" height="11" viewBox="0 0 11 11"><path d="M0.5 0.5 L10.5 10.5 M10.5 0.5 L0.5 10.5" stroke="#111" stroke-width="1.1"/></svg>
<div class="a t" style="left:402px;top:259px;font-size:12px;color:#000;">名称<span style="font-family:'Liberation Mono',monospace;font-size:12px;letter-spacing:-1.2px;">(<span style="text-decoration:underline">N</span>):</span></div>
<div class="a" style="left:469px;top:256px;width:504px;height:20px;background:#fff;border:1px solid #0078d7;"></div>
<div class="a" style="left:473px;top:259px;width:6px;height:14px;background:#0078d7;"></div>
<div class="a t" style="left:473px;top:260px;font-size:12px;color:#fff;">1</div>
<svg class="a" style="left:958px;top:263px;" width="11" height="6" viewBox="0 0 11 6"><path d="M0.5 0.5 L5.5 5.5 L10.5 0.5" fill="none" stroke="#444" stroke-width="1.1"/></svg>
<div class="a t" style="left:402px;top:286px;font-size:12px;color:#000;">说明<span style="font-family:'Liberation Mono',monospace;font-size:12px;letter-spacing:-1.2px;">(<span style="text-decoration:underline">D</span>):</span></div>
<div class="a" style="left:469px;top:283px;width:504px;height:21px;background:#fff;border:1px solid #7a7a7a;"></div>
<div class="a" style="left:394px;top:321px;width:188px;height:146px;background:transparent;border:1px solid #dcdcdc;"></div>
<div class="a" style="left:400px;top:315px;width:28px;height:12px;background:#f0f0f0;"></div>
<div class="a t" style="left:402px;top:315px;font-size:12px;color:#000;">基点</div>
<div class="a" style="left:589px;top:321px;width:188px;height:146px;background:transparent;border:1px solid #dcdcdc;"></div>
<div class="a" style="left:596px;top:315px;width:28px;height:12px;background:#f0f0f0;"></div>
<div class="a t" style="left:598px;top:315px;font-size:12px;color:#000;">对象</div>
<div class="a" style="left:786px;top:321px;width:188px;height:146px;background:transparent;border:1px solid #dcdcdc;"></div>
<div class="a" style="left:793px;top:315px;width:28px;height:12px;background:#f0f0f0;"></div>
<div class="a t" style="left:795px;top:315px;font-size:12px;color:#000;">行为</div>
<svg class="a" style="left:408px;top:334px;" width="13" height="13" viewBox="0 0 13 13"><rect x="0.5" y="0.5" width="12" height="12" fill="#fff" stroke="#333"/></svg>
<div class="a t" style="left:424px;top:336px;font-size:12px;color:#000;">在屏幕上指定<span style="font-family:'Liberation Mono',monospace;font-size:12px;letter-spacing:-1.2px;">(<span style="text-decoration:underline">F</span>)</span></div>
<div class="a" style="left:422px;top:355px;width:21px;height:21px;background:#e1e1e1;border:1px solid #adadad;"></div>
<svg class="a" style="left:424px;top:357px;" width="17" height="17" viewBox="0 0 17 17"><rect x="2.5" y="2.5" width="7" height="6" fill="none" stroke="#3a8fd9" stroke-width="1.2"/><path d="M6.5 5.5 V15 L9 12.5 L11 16 L12.5 15.2 L10.5 11.8 L14 11.5 Z" fill="#fff" stroke="#333" stroke-width="0.9"/></svg>
<div class="a t" style="left:450px;top:360px;font-size:12px;color:#000;">拾取基点<span style="font-family:'Liberation Mono',monospace;font-size:12px;letter-spacing:-1.2px;">(<span style="text-decoration:underline">P</span>)</span></div>
<div class="a t" style="left:423px;top:389px;font-size:12px;color:#000;"><span style="font-family:'Liberation Mono',monospace;font-size:12px;letter-spacing:-1.2px;"><span style="text-decoration:underline">X</span>:</span></div>
<div class="a" style="left:442px;top:385px;width:122px;height:21px;background:#fff;border:1px solid #7a7a7a;"></div>
<div class="a t" style="left:446px;top:389px;font-size:12px;color:#000;"><span style="font-family:'Liberation Mono',monospace;font-size:12px;letter-spacing:-1.2px;">0</span></div>
<div class="a t" style="left:423px;top:416px;font-size:12px;color:#000;"><span style="font-family:'Liberation Mono',monospace;font-size:12px;letter-spacing:-1.2px;"><span style="text-decoration:underline">Y</span>:</span></div>
<div class="a" style="left:442px;top:412px;width:122px;height:21px;background:#fff;border:1px solid #7a7a7a;"></div>
<div class="a t" style="left:446px;top:416px;font-size:12px;color:#000;"><span style="font-family:'Liberation Mono',monospace;font-size:12px;letter-spacing:-1.2px;">0</span></div>
<div class="a t" style="left:423px;top:443px;font-size:12px;color:#000;"><span style="font-family:'Liberation Mono',monospace;font-size:12px;letter-spacing:-1.2px;"><span style="text-decoration:underline">Z</span>:</span></div>
<div class="a" style="left:442px;top:439px;width:122px;height:21px;background:#fff;border:1px solid #7a7a7a;"></div>
<div class="a t" style="left:446px;top:443px;font-size:12px;color:#000;"><span style="font-family:'Liberation Mono',monospace;font-size:12px;letter-spacing:-1.2px;">0</span></div>
<svg class="a" style="left:601px;top:334px;" width="13" height="13" viewBox="0 0 13 13"><rect x="0.5" y="0.5" width="12" height="12" fill="#fff" stroke="#333"/></svg>
<div class="a t" style="left:617px;top:336px;font-size:12px;color:#000;">在屏幕上指定<span style="font-family:'Liberation Mono',monospace;font-size:12px;letter-spacing:-1.2px;">(<span style="text-decoration:underline">O</span>)</span></div>
<div class="a" style="left:614px;top:355px;width:21px;height:21px;background:#e1e1e1;border:1px solid #adadad;"></div>
<svg class="a" style="left:616px;top:357px;" width="17" height="17" viewBox="0 0 17 17"><rect x="5.5" y="1.5" width="8" height="8" fill="#a8d3f5" stroke="#3a8fd9"/><path d="M7 15.5 A4.5 4.5 0 0 1 5.5 6.6" fill="none" stroke="#555" stroke-width="1.1"/><path d="M9.5 8 V16 L11.5 14 L13 16.5 L14 16 L12.8 13.5 L15.5 13.3 Z" fill="#fff" stroke="#333" stroke-width="0.8"/></svg>
<div class="a t" style="left:642px;top:360px;font-size:12px;color:#000;">选择对象<span style="font-family:'Liberation Mono',monospace;font-size:12px;letter-spacing:-1.2px;">(<span style="text-decoration:underline">E</span>)</span></div>
<div class="a" style="left:743px;top:355px;width:21px;height:21px;background:#e1e1e1;border:1px solid #adadad;"></div>
<svg class="a" style="left:745px;top:357px;" width="17" height="17" viewBox="0 0 17 17"><path d="M2 2 V13 L4.5 10.5 L6.5 14 L8 13.2 L6.2 9.8 L9.5 9.5 Z" fill="#fff" stroke="#333" stroke-width="0.9"/><path d="M12 5 L8.5 11 H11.5 L10 16 L15 9 H12 L14 5 Z" fill="#f6c04a"/></svg>
<svg class="a" style="left:616px;top:386px;" width="13" height="13" viewBox="0 0 13 13"><circle cx="6.5" cy="6.5" r="6" fill="#fff" stroke="#333"/></svg>
<div class="a t" style="left:632px;top:388px;font-size:12px;color:#000;">保留对象<span style="font-family:'Liberation Mono',monospace;font-size:12px;letter-spacing:-1.2px;">(<span style="text-decoration:underline">R</span>)</span></div>
<svg class="a" style="left:616px;top:406px;" width="13" height="13" viewBox="0 0 13 13"><circle cx="6.5" cy="6.5" r="6" fill="#fff" stroke="#333"/><circle cx="6.5" cy="6.5" r="3.2" fill="#333"/></svg>
<div class="a t" style="left:632px;top:407px;font-size:12px;color:#000;">转换为块<span style="font-family:'Liberation Mono',monospace;font-size:12px;letter-spacing:-1.2px;">(<span style="text-decoration:underline">C</span>)</span></div>
<svg class="a" style="left:616px;top:426px;" width="13" height="13" viewBox="0 0 13 13"><circle cx="6.5" cy="6.5" r="6" fill="#fff" stroke="#333"/></svg>
<div class="a t" style="left:632px;top:427px;font-size:12px;color:#000;">删除对象<span style="font-family:'Liberation Mono',monospace;font-size:12px;letter-spacing:-1.2px;">(<span style="text-decoration:underline">T</span>)</span></div>
<div class="a t" style="left:616px;top:445px;font-size:12px;color:#000;">没有对象被选取</div>
<svg class="a" style="left:798px;top:334px;" width="13" height="13" viewBox="0 0 13 13"><rect x="0.5" y="0.5" width="12" height="12" fill="#fff" stroke="#333"/></svg>
<div class="a t" style="left:814px;top:336px;font-size:12px;color:#000;">注释性<span style="font-family:'Liberation Mono',monospace;font-size:12px;letter-spacing:-1.2px;">(<span style="text-decoration:underline">A</span>)</span></div>
<svg class="a" style="left:811px;top:356px;" width="13" height="13" viewBox="0 0 13 13"><rect x="0.5" y="0.5" width="12" height="12" fill="#fff" stroke="#c6c6c6"/></svg>
<div class="a t" style="left:828px;top:358px;font-size:12px;color:#000;color:#8d8d8d;">使块方向与布局匹配<span style="font-family:'Liberation Mono',monospace;font-size:12px;letter-spacing:-1.2px;">(<span style="text-decoration:underline">M</span>)</span></div>
<svg class="a" style="left:798px;top:380px;" width="13" height="13" viewBox="0 0 13 13"><rect x="0.5" y="0.5" width="12" height="12" fill="#fff" stroke="#333"/></svg>
<div class="a t" style="left:814px;top:381px;font-size:12px;color:#000;">按统一比例缩放<span style="font-family:'Liberation Mono',monospace;font-size:12px;letter-spacing:-1.2px;">(<span style="text-decoration:underline">S</span>)</span></div>
<svg class="a" style="left:798px;top:400px;" width="13" height="13" viewBox="0 0 13 13"><rect x="0.5" y="0.5" width="12" height="12" fill="#fff" stroke="#333"/><path d="M2.5 6.5 L5 9 L10.5 3.5" fill="none" stroke="#333" stroke-width="1.3"/></svg>
<div class="a t" style="left:814px;top:402px;font-size:12px;color:#000;">允许分解<span style="font-family:'Liberation Mono',monospace;font-size:12px;letter-spacing:-1.2px;">(<span style="text-decoration:underline">W</span>)</span></div>
<svg class="a" style="left:798px;top:421px;" width="13" height="13" viewBox="0 0 13 13"><rect x="0.5" y="0.5" width="12" height="12" fill="#fff" stroke="#333"/></svg>
<div class="a t" style="left:814px;top:423px;font-size:12px;color:#000;">在块编辑器中打开<span style="font-family:'Liberation Mono',monospace;font-size:12px;letter-spacing:-1.2px;">(<span style="text-decoration:underline">O</span>)</span></div>
<div class="a t" style="left:801px;top:445px;font-size:12px;color:#000;">单位<span style="font-family:'Liberation Mono',monospace;font-size:12px;letter-spacing:-1.2px;">(<span style="text-decoration:underline">U</span>):</span></div>
<div class="a" style="left:855px;top:441px;width:108px;height:20px;background:#fff;border:1px solid #7a7a7a;"></div>
<div class="a t" style="left:858px;top:445px;font-size:12px;color:#000;">毫米</div>
<svg class="a" style="left:948px;top:448px;" width="11" height="6" viewBox="0 0 11 6"><path d="M0.5 0.5 L5.5 5.5 L10.5 0.5" fill="none" stroke="#444" stroke-width="1.1"/></svg>
<div class="a" style="left:394px;top:476px;width:21px;height:19px;background:#e1e1e1;border:1px solid #adadad;"></div>
<svg class="a" style="left:397px;top:477px;" width="16" height="16" viewBox="0 0 16 16"><circle cx="8" cy="8.5" r="6.5" fill="#5ab8f5"/><text x="8" y="12.3" font-size="10" font-family="Liberation Sans" fill="#fff" text-anchor="middle" font-weight="bold">?</text></svg>
<div class="a" style="left:820px;top:476px;width:73px;height:19px;background:#e1e1e1;border:2px solid #0078d7;"></div>
<div class="a t" style="left:845px;top:479px;font-size:12px;color:#000;">确定</div>
<div class="a" style="left:899px;top:476px;width:73px;height:19px;background:#e1e1e1;border:1px solid #adadad;"></div>
<div class="a t" style="left:923px;top:479px;font-size:12px;color:#000;">取消</div></body></html>
